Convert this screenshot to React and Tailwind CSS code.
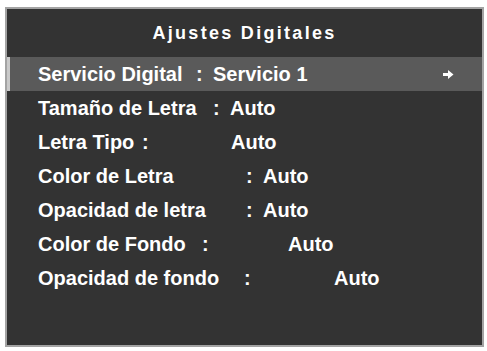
const rows = [
  { label: "Servicio Digital", labelW: "w-[158px]", colonW: "w-[17px]", value: "Servicio 1", active: true },
  { label: "Tamaño de Letra", labelW: "w-[175px]", colonW: "w-[17px]", value: "Auto" },
  { label: "Letra Tipo", labelW: "w-[104px]", colonW: "w-[89px]", value: "Auto" },
  { label: "Color de Letra", labelW: "w-[208px]", colonW: "w-[17px]", value: "Auto" },
  { label: "Opacidad de letra", labelW: "w-[208px]", colonW: "w-[17px]", value: "Auto" },
  { label: "Color de Fondo", labelW: "w-[164px]", colonW: "w-[86px]", value: "Auto" },
  { label: "Opacidad de fondo", labelW: "w-[206px]", colonW: "w-[90px]", value: "Auto" },
];

const Arrow = () => (
  <svg width="11" height="9" viewBox="0 0 11 9" className="text-white">
    <path d="M0 3h5V0L10.5 4.5 5 9V6H0z" fill="currentColor" />
  </svg>
);

export default function App() {
  return (
    <div className="w-[487px] h-[351px] bg-white pt-[7px] pl-[5px]">
      <div
        className="w-[479px] h-[340px] border-2 border-[#a3a3a3] bg-[#333333] text-white"
        style={{ fontFamily: '"Liberation Sans", Arial, sans-serif' }}
      >
        <div className="h-[48px] flex items-center justify-center text-[18px] font-bold tracking-[2.3px]">
          Ajustes Digitales
        </div>
        <div className="flex flex-col">
          {rows.map((r) => (
            <div
              key={r.label}
              className={
                r.active
                  ? "h-[34px] flex items-center bg-[#5a5a5a] border-l-[3px] border-[#c9c9c9] pl-[28px] text-[20px] font-bold"
                  : "h-[34px] flex items-center pl-[31px] text-[20px] font-bold"
              }
            >
              <span className={`${r.labelW} shrink-0 whitespace-nowrap`}>{r.label}</span>
              <span className={`${r.colonW} shrink-0`}>:</span>
              <span className="whitespace-nowrap">{r.value}</span>
              {r.active && (
                <span className="ml-auto mr-[28px] flex items-center">
                  <Arrow />
                </span>
              )}
            </div>
          ))}
        </div>
      </div>
    </div>
  );
}
